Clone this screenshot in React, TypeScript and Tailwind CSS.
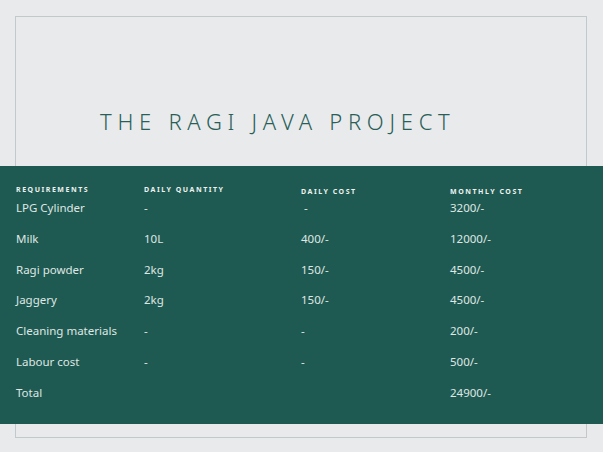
const rows = [
  ['LPG Cylinder', '-', '-', '3200/-'],
  ['Milk', '10L', '400/-', '12000/-'],
  ['Ragi powder', '2kg', '150/-', '4500/-'],
  ['Jaggery', '2kg', '150/-', '4500/-'],
  ['Cleaning materials', '-', '-', '200/-'],
  ['Labour cost', '-', '-', '500/-'],
  ['Total', '', '', '24900/-'],
];

export default function App() {
  return (
    <div className="relative w-[603px] h-[452px] bg-[#e9eaec] overflow-hidden">
      <div className="absolute left-[15px] top-[16px] w-[572px] h-[422px] border border-[#c3c8ca]" />
      <div className="relative h-[166px] flex items-end pb-[34px] pl-[100px]">
        <h1 className="text-[22px] leading-none tracking-[0.26em] text-[#2a5f58] font-['Lato',sans-serif] font-light">
          THE RAGI JAVA PROJECT
        </h1>
      </div>
      <div className="relative h-[258px] bg-[#1f5a52] text-[#eef2f0] pt-[19px]">
        <div className="grid grid-cols-[128px_157px_149px_1fr] pl-[16px] font-['Lato',sans-serif] font-bold text-[7px] tracking-[0.22em] h-[14px]">
          <div>REQUIREMENTS</div>
          <div>DAILY QUANTITY</div>
          <div className="pt-[2px]">DAILY COST</div>
          <div className="pt-[2px]">MONTHLY COST</div>
        </div>
        {rows.map((r, i) => (
          <div key={i} className="grid grid-cols-[128px_157px_149px_1fr] pl-[16px] h-[30.8px] items-start font-['DejaVu_Serif',serif] text-[11.5px] text-[#dfe7e4]">
            <div>{r[0]}</div>
            <div>{r[1]}</div>
            <div className={i === 0 ? 'pl-[3px]' : ''}>{r[2]}</div>
            <div>{r[3]}</div>
          </div>
        ))}
      </div>
    </div>
  );
}
